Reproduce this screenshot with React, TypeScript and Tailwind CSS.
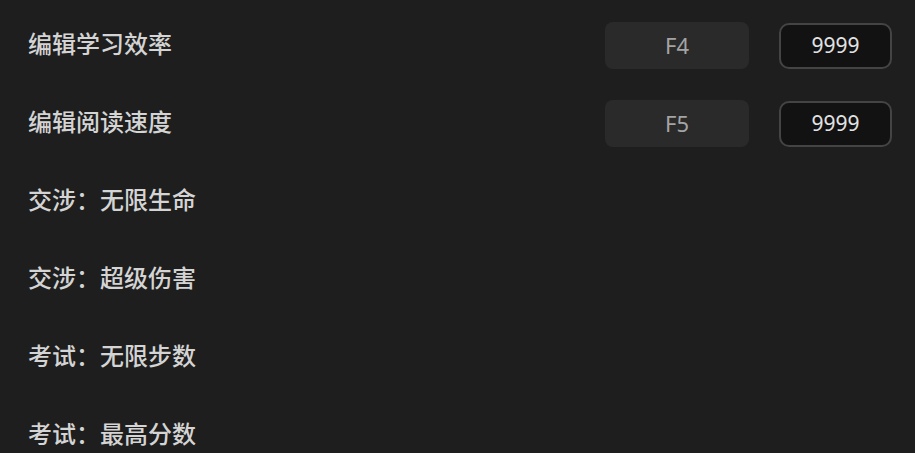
import React from "react";

const rows: { label: string; key?: string; value?: string }[] = [
  { label: "编辑学习效率", key: "F4", value: "9999" },
  { label: "编辑阅读速度", key: "F5", value: "9999" },
  { label: "交涉：无限生命" },
  { label: "交涉：超级伤害" },
  { label: "考试：无限步数" },
  { label: "考试：最高分数" },
];

export default function App() {
  return (
    <div
      className="w-[915px] h-[453px] overflow-hidden bg-[#1e1e1e] flex flex-col pt-[22px] pl-[28px] pr-[23px]"
      style={{ fontFamily: '"Noto Sans", "Noto Sans CJK SC", sans-serif' }}
    >
      {rows.map((r) => (
        <div key={r.label} className="h-[78px] shrink-0 flex items-start justify-between">
          <div className="h-[44px] flex items-center text-[24px] font-medium text-[#d4d4d4] leading-none">
            {r.label}
          </div>
          {r.key && (
            <div className="flex items-start gap-[30px]">
              <div className="w-[144px] h-[47px] rounded-[8px] bg-[#2a2a2a] flex items-center justify-center text-[22px] text-[#a4a4a4]">
                {r.key}
              </div>
              <div className="mt-[1px] w-[113px] h-[46px] rounded-[10px] border-2 border-[#444444] bg-[#121212] flex items-center justify-center text-[21px] text-[#e2e2e2]">
                {r.value}
              </div>
            </div>
          )}
        </div>
      ))}
    </div>
  );
}
